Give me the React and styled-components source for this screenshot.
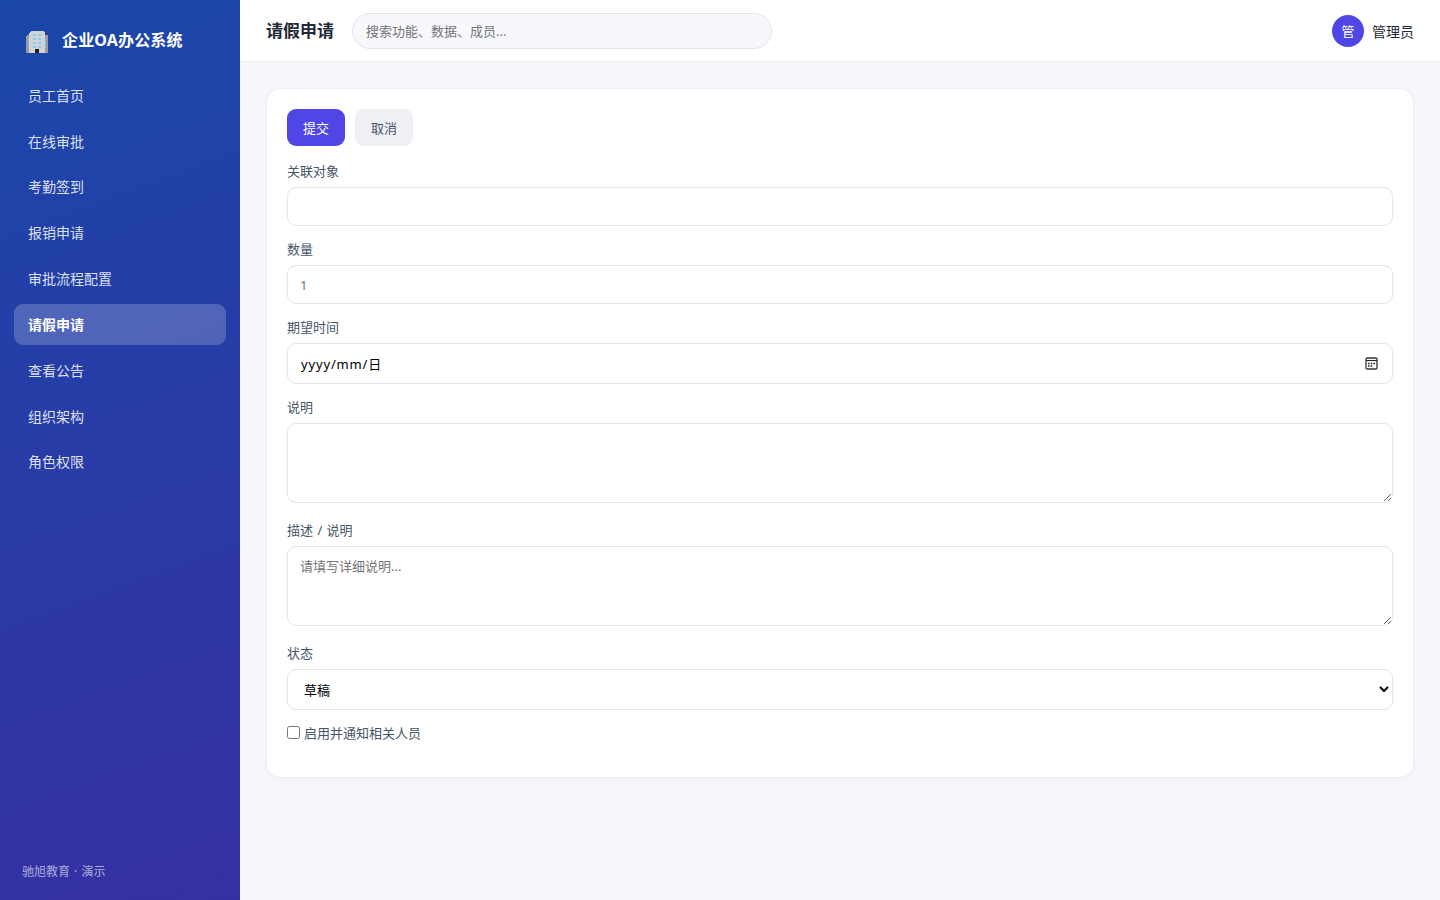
import { useState } from "react";
import styled, { createGlobalStyle } from "styled-components";

const GlobalStyle = createGlobalStyle`
  * {
    box-sizing: border-box;
  }
  body {
    margin: 0;
    background: #f5f7fb;
    color: #1f2937;
    font-family: "Noto Sans", "Noto Sans CJK SC", sans-serif;
    font-size: 14px;
  }
  input, select, textarea, button {
    font-family: inherit;
  }
`;

const Layout = styled.div`
  display: flex;
  height: 100vh;
  overflow: hidden;
`;

const Sidebar = styled.aside`
  display: flex;
  flex-direction: column;
  flex: 0 0 240px;
  padding: 22px 14px 18px;
  color: #fff;
  background: linear-gradient(160deg, #1a47aa, #3730a3);
`;

const Brand = styled.div`
  display: flex;
  align-items: center;
  gap: 14px;
  height: 36px;
  padding-left: 12px;
  margin-bottom: 16.6px;
  font-size: 16px;
  font-weight: 700;
  letter-spacing: 0.15px;
  white-space: nowrap;

  svg {
    margin-top: 4px;
  }
  span {
    padding-bottom: 2px;
  }
`;

const Nav = styled.nav`
  display: flex;
  flex-direction: column;
  gap: 4.4px;
`;

const NavItem = styled.a`
  display: flex;
  align-items: center;
  height: 41.45px;
  padding: 0 14px 1px;
  border-radius: 9px;
  font-size: 14px;
  cursor: pointer;
  color: ${(p) => (p.$active ? "#fff" : "rgba(255, 255, 255, 0.85)")};
  font-weight: ${(p) => (p.$active ? 700 : 400)};
  background: ${(p) => (p.$active ? "rgba(255, 255, 255, 0.2)" : "transparent")};
`;

const SideFooter = styled.div`
  margin-top: auto;
  padding-left: 8px;
  font-size: 12px;
  line-height: 20px;
  word-spacing: 1px;
  color: rgba(255, 255, 255, 0.6);
`;

const Main = styled.div`
  flex: 1;
  min-width: 0;
`;

const Topbar = styled.header`
  display: flex;
  align-items: center;
  gap: 18px;
  height: 62px;
  padding: 0 26px;
  background: #fff;
  border-bottom: 1px solid #eceef3;
`;

const Title = styled.h1`
  margin: 0;
  padding-top: 1px;
  font-size: 17px;
  line-height: 26px;
  font-weight: 700;
`;

const Search = styled.input`
  width: 420px;
  height: 36px;
  padding: 0 13px;
  border: 1px solid #e4e6ee;
  border-radius: 18px;
  background: #f7f8fc;
  font-size: 13px;
  outline: none;

  &::placeholder {
    color: #757575;
  }
`;

const User = styled.div`
  display: flex;
  align-items: center;
  gap: 8px;
  margin-left: auto;
`;

const Avatar = styled.span`
  display: flex;
  align-items: center;
  justify-content: center;
  width: 32px;
  height: 32px;
  border-radius: 50%;
  background: #4f46e5;
  color: #fff;
  font-size: 13px;
`;

const Card = styled.form`
  margin: 26px;
  padding: 20px;
  height: 690px;
  border: 1px solid #eff0f5;
  border-radius: 14px;
  background: #fff;
  box-shadow: 0 1px 4px rgba(30, 41, 90, 0.04);
`;

const Actions = styled.div`
  display: flex;
  gap: 10px;
  margin-bottom: 16px;
`;

const Button = styled.button`
  width: 58px;
  height: 37px;
  padding: 0 0 1px;
  border: 0;
  border-radius: 9px;
  font-size: 13px;
  cursor: pointer;
  color: ${(p) => (p.$primary ? "#fff" : "#475569")};
  background: ${(p) => (p.$primary ? "#4f46e5" : "#eef0f4")};
`;

const Field = styled.div`
  margin-bottom: ${(p) => (p.$tall ? "18px" : "14px")};
`;

const Label = styled.label`
  display: block;
  height: 19px;
  margin-bottom: 6px;
  font-size: 13px;
  line-height: 19px;
  word-spacing: 1px;
  color: #475569;
`;

const Input = styled.input`
  display: block;
  width: 100%;
  height: 39px;
  padding: 0 12px;
  border: 1px solid #e4e5ee;
  border-radius: 9px;
  background: #fff;
  font-size: 13px;
  outline: none;
`;

const DateBox = styled.div`
  display: flex;
  align-items: center;
  justify-content: space-between;
  height: 41px;
  padding: 0 13px 0 13px;
  border: 1px solid #e4e5ee;
  border-radius: 9px;
  color: #000;
  font-size: 13px;
  letter-spacing: 0.85px;
`;

const Textarea = styled.textarea`
  display: block;
  width: 100%;
  height: 80px;
  padding: 10px 12px;
  border: 1px solid #e4e5ee;
  border-radius: 9px;
  background: #fff;
  font-size: 13px;
  line-height: 18px;
  resize: vertical;
  outline: none;
`;

const Select = styled.select`
  display: block;
  width: 100%;
  height: 41px;
  padding: 0 0 0 12px;
  border: 1px solid #e4e5ee;
  border-radius: 9px;
  background: #fff;
  color: #000;
  font-size: 13px;
  outline: none;
`;

const CheckRow = styled.label`
  display: flex;
  align-items: flex-start;
  gap: 4px;
  color: #475569;
  font-size: 13px;
  line-height: 19px;

  input {
    width: 13px;
    height: 13px;
    margin: 2px 0 0;
  }
`;

const menu = [
  "员工首页",
  "在线审批",
  "考勤签到",
  "报销申请",
  "审批流程配置",
  "请假申请",
  "查看公告",
  "组织架构",
  "角色权限",
];

const windowCols = [7, 12];
const windowRows = [3, 7, 11, 15];

function BuildingIcon() {
  return (
    <svg width="22" height="22" viewBox="0 0 22 22" shapeRendering="crispEdges">
      <path d="M0 5l1-1h3v18H0zM18 4h3l1 1v17h-4z" fill="#9b9b9b" />
      <path d="M2 7h1v3H2zM2 11h1v2H2zM2 15h1v2H2zM19 7h1v3h-1zM19 11h1v2h-1zM19 15h1v2h-1z" fill="#6fc3f7" />
      <path d="M3 2l2-2h12l2 2v20H3z" fill="#d3d3d3" />
      {windowRows.map((y) =>
        windowCols.map((x) => (
          <rect key={`${x}-${y}`} x={x} y={y} width="3" height="2" fill="#83cbff" />
        ))
      )}
      <path d="M9 18h4v4H9z" fill="#212121" />
    </svg>
  );
}

function CalendarIcon() {
  return (
    <svg width="15" height="15" viewBox="0 0 15 15" fill="none">
      <rect x="2" y="2" width="11" height="11" rx="1.2" stroke="#333" strokeWidth="1.3" />
      <path d="M2 4.5h11" stroke="#222" strokeWidth="1.1" />
      <path d="M4 7.5h1.6M6.7 7.5h1.6M9.4 7.5H11M4 10h1.6M6.7 10h1.6" stroke="#222" strokeWidth="1.3" />
    </svg>
  );
}

export default function App() {
  const [active, setActive] = useState("请假申请");

  return (
    <Layout>
      <GlobalStyle />
      <Sidebar>
        <Brand>
          <BuildingIcon />
          <span>企业OA办公系统</span>
        </Brand>
        <Nav>
          {menu.map((name) => (
            <NavItem key={name} $active={name === active} onClick={() => setActive(name)}>
              {name}
            </NavItem>
          ))}
        </Nav>
        <SideFooter>驰旭教育 · 演示</SideFooter>
      </Sidebar>
      <Main>
        <Topbar>
          <Title>{active}</Title>
          <Search placeholder="搜索功能、数据、成员..." />
          <User>
            <Avatar>管</Avatar>
            <span>管理员</span>
          </User>
        </Topbar>
        <Card onSubmit={(e) => e.preventDefault()}>
          <Actions>
            <Button $primary>提交</Button>
            <Button type="button">取消</Button>
          </Actions>
          <Field>
            <Label>关联对象</Label>
            <Input />
          </Field>
          <Field>
            <Label>数量</Label>
            <Input placeholder="1" />
          </Field>
          <Field>
            <Label>期望时间</Label>
            <DateBox>
              <span>yyyy/mm/日</span>
              <CalendarIcon />
            </DateBox>
          </Field>
          <Field $tall>
            <Label>说明</Label>
            <Textarea />
          </Field>
          <Field $tall>
            <Label>描述 / 说明</Label>
            <Textarea placeholder="请填写详细说明..." />
          </Field>
          <Field>
            <Label>状态</Label>
            <Select>
              <option>草稿</option>
            </Select>
          </Field>
          <CheckRow>
            <input type="checkbox" />
            <span>启用并通知相关人员</span>
          </CheckRow>
        </Card>
      </Main>
    </Layout>
  );
}
